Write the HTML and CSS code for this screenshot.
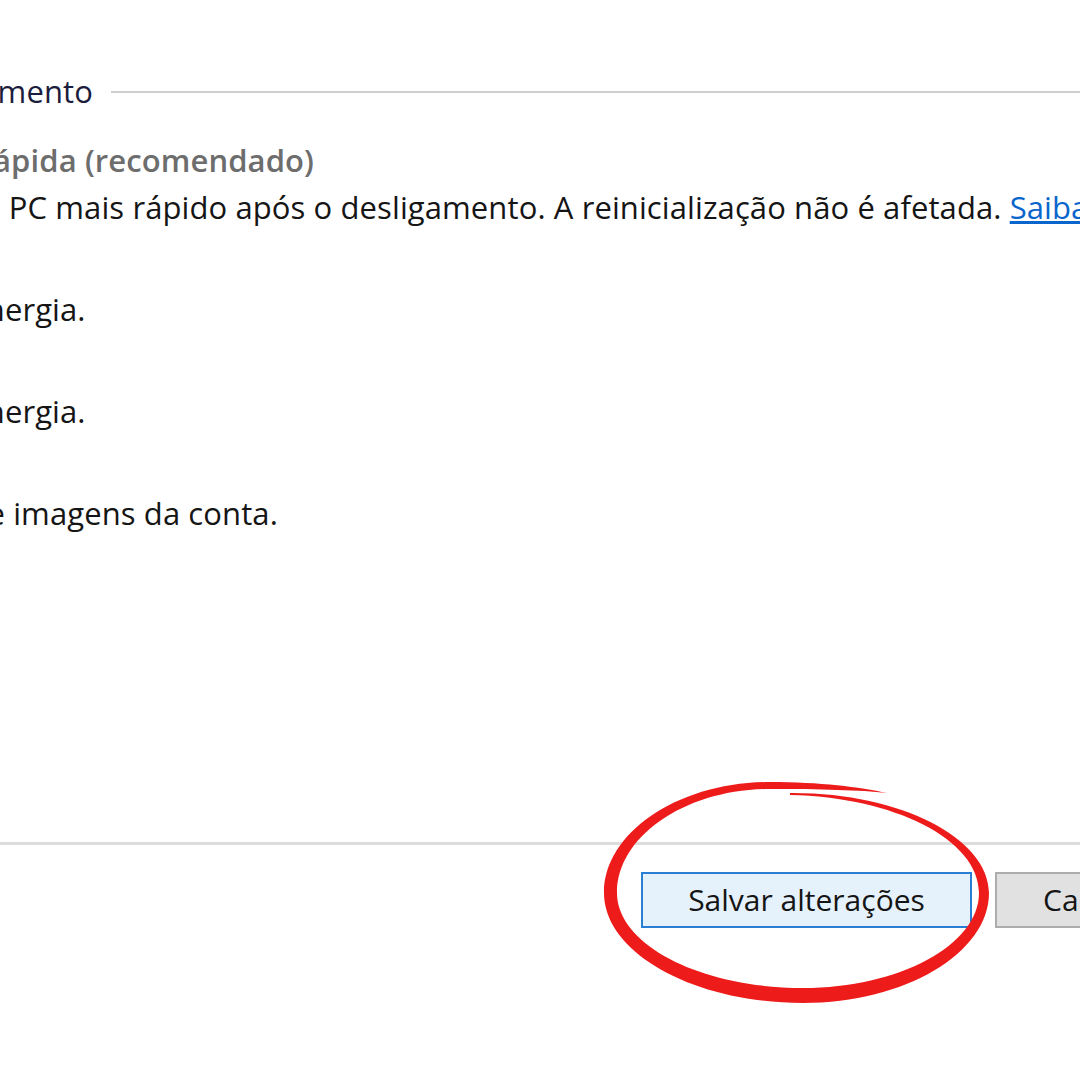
FILE: index.html
```html
<!DOCTYPE html>
<html lang="pt-BR">
<head>
<meta charset="utf-8">
<title>Configurações do sistema</title>
<link rel="stylesheet" href="styles.css">
</head>
<body>
<div class="page">
  <main class="content">
    <div class="group-head">
      <span class="group-title">Configurações de desligamento</span>
      <span class="group-rule"></span>
    </div>
    <ul class="options">
      <li class="option">
        <span class="opt-label disabled">Ligar inicialização rápida (recomendado)</span>
        <span class="opt-desc">Isso ajuda a iniciar o PC mais rápido após o desligamento. A reinicialização não é afetada. <a class="link" href="#">Saiba mais</a></span>
      </li>
      <li class="option">
        <span class="opt-label">Suspender</span>
        <span class="opt-desc">Mostrar no menu Energia.</span>
      </li>
      <li class="option">
        <span class="opt-label">Hibernar</span>
        <span class="opt-desc">Mostrar no menu Energia.</span>
      </li>
      <li class="option">
        <span class="opt-label">Bloquear</span>
        <span class="opt-desc">Mostrar no menu de imagens da conta.</span>
      </li>
    </ul>
  </main>
  <footer class="footer">
    <div class="buttons">
      <button class="btn btn-primary">Salvar alterações</button>
      <button class="btn btn-secondary">Cancelar</button>
    </div>
  </footer>
</div>
<svg class="annotation" width="1080" height="1080" viewBox="0 0 1080 1080" aria-hidden="true">
  <path class="ring" d="M790,793
    C899,792 989,838 989,893
    C989,953 905,1003 803,1003
    C694,1003 604,953 604,893
    C604,832 679,782 770,782
    C820,782 860,787 887,793
    C860,790 820,789 770,789
    C686,789 617,836 617,893
    C617,945 701,988 803,988
    C899,988 979,945 979,893
    C979,839 893,797 790,795 Z"/>
</svg>
</body>
</html>
```
FILE: styles.css
```css
html, body {
  margin: 0;
  padding: 0;
  background: #ffffff;
}
body {
  width: 1080px;
  height: 1080px;
  overflow: hidden;
  position: relative;
  font-family: "Open Sans", "Noto Sans", "Liberation Sans", sans-serif;
  font-size: 31px;
  letter-spacing: 0.1px;
  line-height: 40px;
  color: #151515;
}
.page {
  display: flex;
  flex-direction: column;
  width: 1080px;
}
.content {
  height: 842px;
  box-sizing: border-box;
  padding-top: 71px;
}
.group-head {
  display: flex;
  align-items: center;
  margin-left: -365px;
  height: 40px;
}
.group-title {
  color: #1c1c3c;
  white-space: nowrap;
}
.group-rule {
  flex: 1;
  height: 2px;
  background: #cfcfcf;
  margin-left: 18px;
  margin-top: 2px;
}
.options {
  list-style: none;
  margin: 29px 0 0 -294px;
  padding: 0;
  display: flex;
  flex-direction: column;
  gap: 14px;
}
.option {
  display: flex;
  flex-direction: column;
  gap: 7px;
  white-space: nowrap;
}
.option + .option {
  margin-top: 1px;
}
.opt-label {
  font-weight: 600;
  color: #151515;
}
.opt-label.disabled {
  color: #6d6d6d;
}
.link {
  color: #0a66cc;
  text-decoration: underline;
}
.footer {
  border-top: 3px solid #dcdcdc;
  padding-top: 27px;
}
.buttons {
  display: flex;
  gap: 23px;
  padding-left: 641px;
}
.btn {
  flex-shrink: 0;
  height: 56px;
  box-sizing: border-box;
  font-family: inherit;
  font-size: 30px;
  letter-spacing: 0;
  line-height: 40px;
  color: #151515;
  margin: 0;
  white-space: nowrap;
}
.btn-primary {
  width: 331px;
  background: #e5f1fb;
  border: 2px solid #2a7fd4;
  padding: 0;
}
.btn-secondary {
  background: #e1e1e1;
  border: 2px solid #adadad;
  padding: 0 46px;
}
.annotation {
  position: absolute;
  left: 0;
  top: 0;
  pointer-events: none;
}
.ring {
  fill: #ee1b1b;
}
```
